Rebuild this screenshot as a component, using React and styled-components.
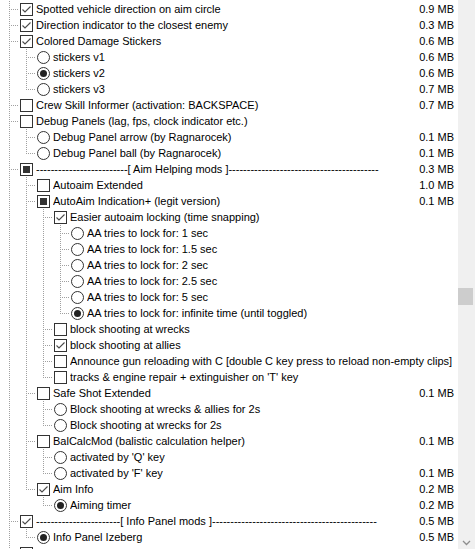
import React from "react";
import styled, { createGlobalStyle, css } from "styled-components";

const Global = createGlobalStyle`
  html, body { margin: 0; padding: 0; background: #fff; overflow: hidden; }
  body { font-family: "Liberation Sans", Arial, sans-serif; font-size: 11px; color: #000; }
`;

const Window = styled.div`
  display: flex;
  width: 475px;
  height: 549px;
  overflow: hidden;
  background: #fff;
`;

const Tree = styled.div`
  flex: 1;
  display: flex;
  flex-direction: column;
  padding-top: 1px;
  min-width: 0;
  overflow: hidden;
`;

const Row = styled.div`
  display: flex;
  align-items: center;
  height: 16px;
  flex: none;
  padding-right: 4px;
  white-space: nowrap;
`;

const dotV = css`
  background-image: repeating-linear-gradient(to bottom, #a0a0a0 0 1px, transparent 1px 2px);
`;

const Guide = styled.div`
  position: relative;
  width: 17px;
  height: 16px;
  flex: none;
  &::before {
    content: "";
    display: ${(p) => (p.$line ? "block" : "none")};
    position: absolute;
    left: 9px;
    top: 0;
    width: 1px;
    height: 16px;
    ${dotV}
  }
`;

const Connector = styled.div`
  position: relative;
  width: 17px;
  height: 16px;
  flex: none;
  &::before {
    content: "";
    position: absolute;
    left: 9px;
    top: 0;
    width: 1px;
    height: ${(p) => (p.$last ? "9px" : "16px")};
    ${dotV}
  }
  &::after {
    content: "";
    position: absolute;
    left: 11px;
    top: 8px;
    width: 7px;
    height: 1px;
    background-image: repeating-linear-gradient(to right, #a0a0a0 0 1px, transparent 1px 2px);
  }
`;

const Box = styled.span`
  position: relative;
  flex: none;
  width: 13px;
  height: 13px;
  box-sizing: border-box;
  margin-left: 3px;
  margin-right: 3px;
  border: 1px solid #333;
  background: #fff;
  display: flex;
  align-items: center;
  justify-content: center;
`;

const PartialFill = styled.span`
  width: 7px;
  height: 7px;
  background: #333;
`;

const RadioCircle = styled.span`
  flex: none;
  width: 13px;
  height: 13px;
  box-sizing: border-box;
  margin-left: 3px;
  margin-right: 3px;
  border: 1px solid #333;
  border-radius: 50%;
  background: #fff;
  display: flex;
  align-items: center;
  justify-content: center;
`;

const Dot = styled.span`
  width: 7px;
  height: 7px;
  border-radius: 50%;
  background: #222;
`;

const Label = styled.span`
  flex: 1;
  min-width: 0;
  overflow: hidden;
  line-height: 16px;
`;

const Size = styled.span`
  flex: none;
  margin-left: 8px;
  line-height: 16px;
`;

const Scrollbar = styled.div`
  position: relative;
  width: 17px;
  flex: none;
  background: #f0f0f0;
`;

const Thumb = styled.div`
  position: absolute;
  left: 0;
  top: 288px;
  width: 15px;
  height: 17px;
  background: #cdcdcd;
`;

const DownButton = styled.div`
  position: absolute;
  left: 0;
  bottom: 0;
  width: 17px;
  height: 17px;
`;

const Check = () => (
  <svg width="11" height="11" viewBox="0 0 11 11">
    <path d="M1.5 5.5 L4 8 L9.5 2.5" fill="none" stroke="#4a4a4a" strokeWidth="1.1" />
  </svg>
);

const Control = ({ type, state }) => {
  if (type === "radio")
    return <RadioCircle>{state === "on" && <Dot />}</RadioCircle>;
  return (
    <Box>
      {state === "on" && <Check />}
      {state === "partial" && <PartialFill />}
    </Box>
  );
};

const dash = (n) => "-".repeat(n);

const rows = [
  { l: 0, t: "check", s: "on", x: "Spotted vehicle direction on aim circle", mb: "0.9 MB" },
  { l: 0, t: "check", s: "on", x: "Direction indicator to the closest enemy", mb: "0.3 MB" },
  { l: 0, t: "check", s: "on", x: "Colored Damage Stickers", mb: "0.6 MB" },
  { l: 1, t: "radio", s: "off", x: "stickers v1", mb: "0.6 MB" },
  { l: 1, t: "radio", s: "on", x: "stickers v2", mb: "0.6 MB" },
  { l: 1, t: "radio", s: "off", x: "stickers v3", mb: "0.7 MB" },
  { l: 0, t: "check", s: "off", x: "Crew Skill Informer (activation: BACKSPACE)", mb: "0.7 MB" },
  { l: 0, t: "check", s: "off", x: "Debug Panels (lag, fps, clock indicator etc.)" },
  { l: 1, t: "radio", s: "off", x: "Debug Panel arrow (by Ragnarocek)", mb: "0.1 MB" },
  { l: 1, t: "radio", s: "off", x: "Debug Panel ball (by Ragnarocek)", mb: "0.1 MB" },
  { l: 0, t: "check", s: "partial", x: `${dash(25)}[ Aim Helping mods ]${dash(41)}`, mb: "0.3 MB" },
  { l: 1, t: "check", s: "off", x: "Autoaim Extended", mb: "1.0 MB" },
  { l: 1, t: "check", s: "partial", x: "AutoAim Indication+ (legit version)", mb: "0.1 MB" },
  { l: 2, t: "check", s: "on", x: "Easier autoaim locking (time snapping)" },
  { l: 3, t: "radio", s: "off", x: "AA tries to lock for: 1 sec" },
  { l: 3, t: "radio", s: "off", x: "AA tries to lock for: 1.5 sec" },
  { l: 3, t: "radio", s: "off", x: "AA tries to lock for: 2 sec" },
  { l: 3, t: "radio", s: "off", x: "AA tries to lock for: 2.5 sec" },
  { l: 3, t: "radio", s: "off", x: "AA tries to lock for: 5 sec" },
  { l: 3, t: "radio", s: "on", x: "AA tries to lock for: infinite time (until toggled)" },
  { l: 2, t: "check", s: "off", x: "block shooting at wrecks" },
  { l: 2, t: "check", s: "on", x: "block shooting at allies" },
  { l: 2, t: "check", s: "off", x: "Announce gun reloading with C [double C key press to reload non-empty clips]" },
  { l: 2, t: "check", s: "off", x: "tracks & engine repair + extinguisher on 'T' key" },
  { l: 1, t: "check", s: "off", x: "Safe Shot Extended", mb: "0.1 MB" },
  { l: 2, t: "radio", s: "off", x: "Block shooting at wrecks & allies for 2s" },
  { l: 2, t: "radio", s: "off", x: "Block shooting at wrecks for 2s" },
  { l: 1, t: "check", s: "off", x: "BalCalcMod (balistic calculation helper)", mb: "0.1 MB" },
  { l: 2, t: "radio", s: "off", x: "activated by 'Q' key" },
  { l: 2, t: "radio", s: "off", x: "activated by 'F' key", mb: "0.1 MB" },
  { l: 1, t: "check", s: "on", x: "Aim Info", mb: "0.2 MB" },
  { l: 2, t: "radio", s: "on", x: "Aiming timer", mb: "0.2 MB" },
  { l: 0, t: "check", s: "on", x: `${dash(23)}[ Info Panel mods ]${dash(45)}`, mb: "0.5 MB" },
  { l: 1, t: "radio", s: "on", x: "Info Panel Izeberg", mb: "0.5 MB" },
  { l: 0, t: "check", s: "off", x: `${dash(21)}[ Sight mods ]${dash(50)}`, mb: "0.3 MB" },
];

const hasNext = (r, j) => {
  if (j === 0) return true;
  for (let k = r + 1; k < rows.length; k++) {
    if (rows[k].l < j) return false;
    if (rows[k].l === j) return true;
  }
  return false;
};

export default function App() {
  return (
    <>
      <Global />
      <Window>
        <Tree>
          {rows.map((row, i) => (
            <Row key={i}>
              {Array.from({ length: row.l }, (_, j) => (
                <Guide key={j} $line={hasNext(i, j)} />
              ))}
              <Connector $last={!hasNext(i, row.l)} />
              <Control type={row.t} state={row.s} />
              <Label>{row.x}</Label>
              {row.mb && <Size>{row.mb}</Size>}
            </Row>
          ))}
        </Tree>
        <Scrollbar>
          <Thumb />
          <DownButton>
            <svg width="17" height="17" viewBox="0 0 17 17">
              <path d="M5 9 L8.5 12.5 L12 9" fill="none" stroke="#8e8e8e" strokeWidth="1.3" />
            </svg>
          </DownButton>
        </Scrollbar>
      </Window>
    </>
  );
}
